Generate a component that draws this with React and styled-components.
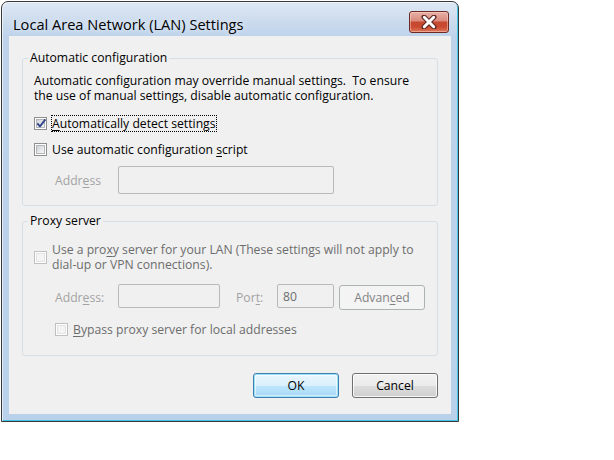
import React from 'react';
import styled, { createGlobalStyle, css } from 'styled-components';

const GlobalStyle = createGlobalStyle`
  html, body { margin: 0; padding: 0; background: #ffffff; }
  body { font-family: "Open Sans", "Noto Sans", "Liberation Sans", sans-serif; font-size: 12.2px; color: #000; }
  * { box-sizing: border-box; }
`;

const Screen = styled.div`
  padding: 1px 0 0 1px;
`;

const Window = styled.div`
  width: 458px;
  height: 421px;
  border: 1px solid #383838;
  border-radius: 7px 7px 0 0;
  background: linear-gradient(to bottom, #dde8f4 0px, #cddcee 18px, #bed3eb 34px, #b9d1ea 100%);
  box-shadow: inset 1px 1px 0 rgba(255, 255, 255, 0.6), inset -1px -1px 0 #41c6ea;
  padding: 0 7px 7px 7px;
  display: flex;
  flex-direction: column;
`;

const TitleBar = styled.div`
  height: 34px;
  display: flex;
  align-items: flex-start;
  justify-content: space-between;
  padding: 0 2px 0 4px;
`;

const Title = styled.div`
  margin-top: 12px;
  font-size: 14.6px;
  line-height: 20px;
  color: #000;
  text-shadow: 0 0 6px rgba(255, 255, 255, 0.9);
`;

const CloseButton = styled.div`
  margin-top: 9px;
  width: 40px;
  height: 22px;
  border: 1px solid #6c2a24;
  border-radius: 3px;
  background: linear-gradient(to bottom, #e9b1a7 0%, #d98a7c 45%, #c5482f 50%, #c94a31 75%, #df7a5c 100%);
  box-shadow: inset 0 0 0 1px rgba(255, 220, 210, 0.45);
  display: flex;
  align-items: center;
  justify-content: center;
`;

const Client = styled.div`
  flex: 1;
  background: #f0f0f0;
  padding: 14px 13px 0 13px;
  display: flex;
  flex-direction: column;
`;

const Group = styled.fieldset`
  margin: ${p => p.$mt || 0}px 0 0 0;
  padding: 0 11px ${p => p.$pb}px 11px;
  border: 1px solid #d5dfe5;
  border-radius: 3px;
  min-width: 0;
`;

const Legend = styled.legend`
  padding: 0 2px;
  margin-left: -6px;
  font-size: 12.2px;
  line-height: 16px;
  color: #000;
`;

const Description = styled.div`
  margin-top: 7px;
  line-height: 15px;
  white-space: pre-wrap;
`;

const CheckRow = styled.div`
  display: flex;
  align-items: center;
  min-height: 17px;
  margin-top: ${p => p.$mt || 0}px;
  margin-left: ${p => p.$ml || 0}px;
`;

const Box = styled.span`
  flex: none;
  position: relative;
  width: 13px;
  height: 13px;
  border: 1px solid ${p => (p.$disabled ? '#c0c0c0' : '#8e8f8f')};
  background: #fff;
  padding: 1px;
  display: flex;
  & > i {
    display: block;
    flex: 1;
    border: 1px solid ${p => (p.$disabled ? '#e3e3e3' : '#b3b6ba')};
    background: ${p =>
      p.$disabled
        ? '#f4f4f4'
        : 'linear-gradient(135deg, #cdd1d6 0%, #e4e6e8 50%, #f7f7f7 100%)'};
  }
  & > svg {
    position: absolute;
    left: 0px;
    top: -1px;
  }
`;

const CheckLabel = styled.span`
  margin-left: 4px;
  border: 1px dotted ${p => (p.$focus ? '#000' : 'transparent')};
  line-height: 15px;
  color: ${p => (p.$disabled ? '#6d6d6d' : '#000')};
`;

const FieldRow = styled.div`
  display: flex;
  align-items: flex-start;
  margin-top: ${p => p.$mt}px;
  margin-left: 21px;
`;

const FieldLabel = styled.span`
  width: ${p => p.$w}px;
  margin-left: ${p => p.$ml || 0}px;
  align-self: center;
  color: #a3a3a3;
  line-height: 15px;
`;

const TextBox = styled.div`
  width: ${p => p.$w}px;
  height: ${p => p.$h}px;
  border: 1px solid #b9b9b9;
  border-radius: 2px;
  background: #f0f0f0;
  padding-left: 5px;
  display: flex;
  align-items: center;
  color: #6d6d6d;
`;

const buttonBase = css`
  width: 86px;
  height: 25px;
  border-radius: 3px;
  display: flex;
  align-items: center;
  justify-content: center;
  font-size: 12.2px;
`;

const SmallButton = styled.div`
  ${buttonBase}
  margin-left: 5px;
  margin-top: 1px;
  border: 1px solid #adb2b5;
  background: #f4f4f4;
  color: #838383;
`;

const ButtonRow = styled.div`
  display: flex;
  justify-content: flex-end;
  gap: 13px;
  margin-top: 17px;
`;

const Button = styled.div`
  ${buttonBase}
  color: #000;
  ${p =>
    p.$default
      ? css`
          border: 1px solid #3c7fb1;
          background: linear-gradient(to bottom, #eaf6fd 0%, #d9f0fc 50%, #bee6fd 51%, #a7d9f5 100%);
          box-shadow: inset 0 0 0 1px #9ee0f8, inset 0 0 0 2px rgba(255, 255, 255, 0.5);
        `
      : css`
          border: 1px solid #707070;
          background: linear-gradient(to bottom, #f2f2f2 0%, #ebebeb 50%, #dddddd 51%, #cfcfcf 100%);
          box-shadow: inset 0 0 0 1px rgba(255, 255, 255, 0.8);
        `}
`;

const U = styled.span`
  text-decoration: underline;
  text-underline-offset: 2px;
`;

const Line = styled.span`
  display: block;
`;

function CheckBox({ checked, disabled }) {
  return (
    <Box $disabled={disabled}>
      <i />
      {checked && (
        <svg width="13" height="13" viewBox="0 0 13 13">
          <path d="M2.3 6.4 L5 9.4 L10.4 2.4" fill="none" stroke="#34478a" strokeWidth="1.9" strokeLinejoin="round" />
        </svg>
      )}
    </Box>
  );
}

export default function App() {
  return (
    <Screen>
      <GlobalStyle />
      <Window>
        <TitleBar>
          <Title>Local Area Network (LAN) Settings</Title>
          <CloseButton>
            <svg width="16" height="14" viewBox="0 0 16 14">
              <path d="M3 2 L13 12 M13 2 L3 12" stroke="#5a2520" strokeWidth="5" strokeLinecap="round" />
              <path d="M3.3 2.3 L12.7 11.7 M12.7 2.3 L3.3 11.7" stroke="#ffffff" strokeWidth="3" strokeLinecap="round" />
            </svg>
          </CloseButton>
        </TitleBar>
        <Client>
          <Group $pb={11}>
            <Legend>Automatic configuration</Legend>
            <Description>
              {'Automatic configuration may override manual settings.  To ensure\nthe use of manual settings, disable automatic configuration.'}
            </Description>
            <CheckRow $mt={12}>
              <CheckBox checked />
              <CheckLabel $focus>
                <U>A</U>utomatically detect settings
              </CheckLabel>
            </CheckRow>
            <CheckRow $mt={9}>
              <CheckBox />
              <CheckLabel>
                Use automatic configuration <U>s</U>cript
              </CheckLabel>
            </CheckRow>
            <FieldRow $mt={8}>
              <FieldLabel $w={63}>
                Addr<U>e</U>ss
              </FieldLabel>
              <TextBox $w={216} $h={28} />
            </FieldRow>
          </Group>
          <Group $mt={7} $pb={17}>
            <Legend>Proxy server</Legend>
            <CheckRow $mt={12}>
              <CheckBox disabled />
              <CheckLabel $disabled>
                <Line>
                  Use a pro<U>x</U>y server for your LAN (These settings will not apply to
                </Line>
                <Line>dial-up or VPN connections).</Line>
              </CheckLabel>
            </CheckRow>
            <FieldRow $mt={11}>
              <FieldLabel $w={63}>
                Addr<U>e</U>ss:
              </FieldLabel>
              <TextBox $w={102} $h={24} />
              <FieldLabel $w={41} $ml={16}>
                Por<U>t</U>:
              </FieldLabel>
              <TextBox $w={57} $h={24}>80</TextBox>
              <SmallButton>
                Advan<U>c</U>ed
              </SmallButton>
            </FieldRow>
            <CheckRow $mt={11} $ml={21}>
              <CheckBox disabled />
              <CheckLabel $disabled>
                <U>B</U>ypass proxy server for local addresses
              </CheckLabel>
            </CheckRow>
          </Group>
          <ButtonRow>
            <Button $default>OK</Button>
            <Button>Cancel</Button>
          </ButtonRow>
        </Client>
      </Window>
    </Screen>
  );
}
